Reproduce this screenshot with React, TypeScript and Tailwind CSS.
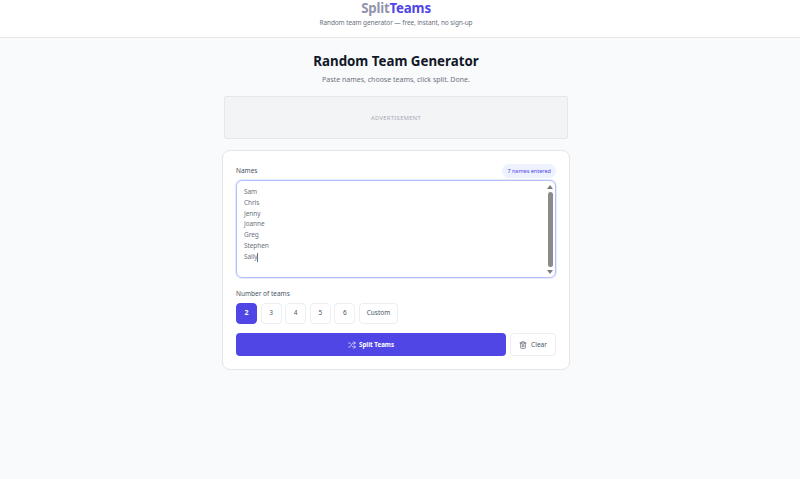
import { Shuffle, Trash2 } from "lucide-react";

const names = ["Sam", "Chris", "Jenny", "Joanne", "Greg", "Stephen"];

export default function App() {
  return (
    <div className="h-[479px] w-[800px] overflow-hidden bg-[#f9fafb] font-['Noto_Sans',sans-serif]">
      <header className="flex h-[38px] flex-col items-center border-b border-[#e5e7eb] bg-white pr-[8px]">
        <div className="mt-[-2px] text-[13.3px] leading-[20px] font-bold tracking-[-0.2px] text-[#4f46e5]">
          <span className="text-[#9294ac]">Split</span>Teams
        </div>
        <div className="text-[6.5px] leading-[10px] tracking-[-0.1px] text-[#6b7280]">Random team generator — free, instant, no sign-up</div>
      </header>
      <main className="ml-[222px] flex w-[348px] flex-col items-stretch">
        <h1 className="mt-[13px] text-center text-[13.3px] leading-[20px] font-bold text-[#111827]">Random Team Generator</h1>
        <p className="mt-[3px] text-center text-[7px] leading-[12px] text-[#6b7280]">Paste names, choose teams, click split. Done.</p>
        <div className="mx-[2px] mt-[10px] flex h-[43px] items-center justify-center rounded-[2px] border border-[#e5e7eb] bg-[#f3f4f6] pt-[1px] text-[5.7px] tracking-[0.4px] text-[#a3a9b3]">
          ADVERTISEMENT
        </div>
        <section className="mt-[11px] flex h-[220px] flex-col rounded-[8px] border border-[#e5e7eb] bg-white px-[13px] pt-[13px]">
          <div className="flex h-[16px] items-center justify-between">
            <span className="mt-[-3px] text-[6.5px] text-[#4b5563]">Names</span>
            <span className="mt-[-2px] flex h-[14px] items-center rounded-full bg-[#eef2ff] px-[5px] text-[5.5px] text-[#4f46e5]">7 names entered</span>
          </div>
          <div className="flex h-[98px] justify-between rounded-[6px] border border-[#b4bffc] bg-white pr-[1.5px] shadow-[0_0_0_1px_#e6eaff]">
            <div className="pt-[6px] pl-[7px] text-[6.5px] leading-[10.83px] tracking-[-0.08px] text-[#6b7280]">
              {names.map((n) => (
                <div key={n}>{n}</div>
              ))}
              <div className="flex items-center">
                Sally<span className="h-[9px] w-px bg-[#6b7280]" />
              </div>
            </div>
            <div className="flex w-[7px] flex-col items-center pt-[4px] pb-[3px]">
              <div className="h-0 w-0 border-x-[3px] border-b-[4px] border-x-transparent border-b-[#7b7b7b]" />
              <div className="mt-[3px] w-[5px] flex-1 rounded-full bg-[#8a8a8a]" />
              <div className="mt-[3px] h-0 w-0 border-x-[3px] border-t-[4px] border-x-transparent border-t-[#7b7b7b]" />
            </div>
          </div>
          <div className="mt-[11px] text-[6.5px] leading-[10px] text-[#4b5563]">Number of teams</div>
          <div className="mt-[4px] flex gap-[3.6px]">
            <button className="h-[20.5px] w-[21px] rounded-[4px] border border-[#4f46e5] bg-[#4f46e5] text-[7px] font-bold text-white">2</button>
            {["3", "4", "5", "6"].map((n) => (
              <button key={n} className="h-[20.5px] w-[21px] rounded-[4px] border border-[#eceef1] bg-white text-[6.5px] text-[#4b5563]">{n}</button>
            ))}
            <button className="h-[20.5px] w-[39px] rounded-[4px] border border-[#eceef1] bg-white text-[6.5px] text-[#4b5563]">Custom</button>
          </div>
          <div className="mt-[9.5px] flex gap-[4px]">
            <button className="flex h-[23px] flex-1 items-center justify-center gap-[3px] rounded-[4px] bg-[#4f46e5] text-[6.2px] font-bold text-white">
              <Shuffle className="h-[8px] w-[8px]" />
              Split Teams
            </button>
            <button className="flex h-[23px] w-[46px] items-center justify-center gap-[4px] rounded-[4px] border border-[#eceef1] bg-white text-[6.5px] text-[#4b5563]">
              <Trash2 className="h-[8px] w-[8px]" />
              Clear
            </button>
          </div>
        </section>
      </main>
    </div>
  );
}
